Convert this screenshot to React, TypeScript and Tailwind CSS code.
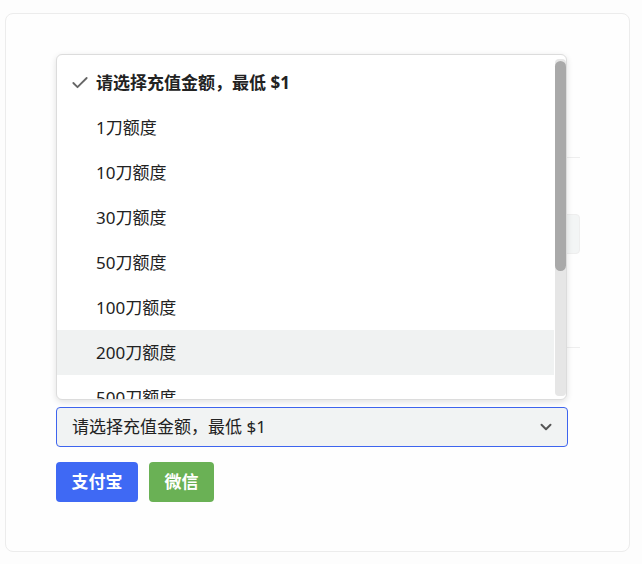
import { Check, ChevronDown } from "lucide-react";

const options = [
  "1刀额度",
  "10刀额度",
  "30刀额度",
  "50刀额度",
  "100刀额度",
  "200刀额度",
  "500刀额度",
];

export default function App() {
  return (
    <div
      className="w-[642px] h-[564px] bg-[#fdfdfd] pt-[13px] pl-[5px]"
      style={{ fontFamily: '"Noto Sans", "Noto Sans CJK SC", sans-serif' }}
    >
      <div className="w-[625px] h-[539px] rounded-lg border border-[#ececec] bg-[#fefefe] pt-[40px] pl-[50px]">
        {/* content behind the open menu */}
        <div className="relative w-[524px] h-[346px]">
          <div className="absolute left-0 right-0 top-[103px] h-px bg-[#eeeeee]" />
          <div className="absolute left-0 right-0 top-[160px] h-[40px] rounded bg-[#f3f5f5] border border-[#eeeeee]" />
          <div className="absolute left-0 right-0 top-[293px] h-px bg-[#eeeeee]" />

          {/* open menu */}
          <div className="absolute left-0 top-0 w-[511px] h-[346px] rounded-md border border-[#dcdcdc] bg-white shadow-[0_2px_6px_rgba(0,0,0,0.12)] overflow-hidden">
            <div className="pt-[5px] pr-[12px]">
              <div className="flex items-center h-[45px] pl-[13px] text-[17px] font-bold text-[#222]">
                <Check size={20} strokeWidth={2.2} className="text-[#666] mr-[6px]" />
                请选择充值金额，最低 $1
              </div>
              {options.map((o) => (
                <div
                  key={o}
                  className={`flex items-center h-[45px] pl-[39px] text-[17px] text-[#222] ${
                    o === "200刀额度" ? "bg-[#f0f2f2]" : ""
                  }`}
                >
                  {o}
                </div>
              ))}
            </div>
            {/* scrollbar */}
            <div className="absolute right-0 top-[4px] bottom-[3px] w-[11px] bg-[#e6e6e6] rounded-sm">
              <div className="mt-[2px] h-[210px] w-[11px] rounded-full bg-[#a9a9a9]" />
            </div>
          </div>
        </div>

        <div className="mt-[7px] w-[512px] h-[40px] flex items-center justify-between rounded border border-[#3e64ee] bg-[#f1f3f3] pl-[15px] pr-[12px] text-[17px] text-[#222]">
          <span>请选择充值金额，最低 $1</span>
          <ChevronDown size={18} strokeWidth={2.6} className="text-[#555]" />
        </div>

        <div className="mt-[15px] flex gap-[11px]">
          <button className="h-[40px] w-[82px] rounded bg-[#3f69f4] text-white text-[17px] font-bold">
            支付宝
          </button>
          <button className="h-[40px] w-[65px] rounded bg-[#6ab155] text-white text-[17px] font-bold">
            微信
          </button>
        </div>
      </div>
    </div>
  );
}
